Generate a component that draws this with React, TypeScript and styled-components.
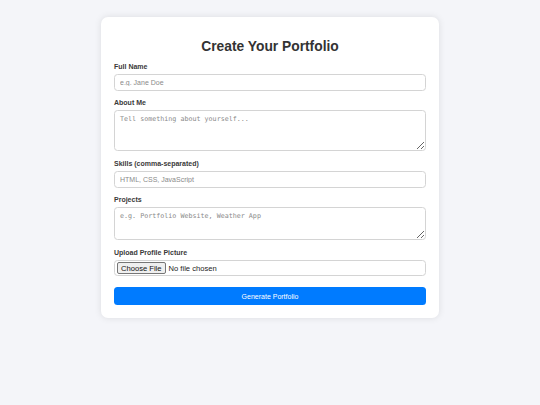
import React from "react";
import styled, { createGlobalStyle } from "styled-components";

const Global = createGlobalStyle`
  html, body { margin: 0; padding: 0; }
  body {
    background: #f4f5f9;
    font-family: "Liberation Sans", Arial, sans-serif;
    color: #333;
  }
`;

const Page = styled.div`
  display: flex;
  justify-content: center;
  align-items: flex-start;
  padding-top: 17px;
  min-height: 405px;
  box-sizing: border-box;
`;

const Card = styled.form`
  width: 338px;
  box-sizing: border-box;
  background: #fff;
  border-radius: 7px;
  box-shadow: 0 0 7px rgba(0, 0, 0, 0.1);
  padding: 13px 13px 13px;
  display: flex;
  flex-direction: column;
`;

const Title = styled.h2`
  margin: 8px 0 8px;
  text-align: center;
  font-size: 13.8px;
  font-weight: bold;
  line-height: 17px;
  color: #333;
`;

const Label = styled.label`
  display: block;
  font-size: 7px;
  font-weight: bold;
  line-height: 8px;
  color: #3a3a3a;
  margin-bottom: 3px;
`;

const fieldBase = `
  display: block;
  width: 100%;
  box-sizing: border-box;
  border: 1px solid #d4d4d4;
  border-radius: 3.5px;
  padding: 4px 5px;
  font-size: 7px;
  color: #333;
  background: #fff;
  margin: 0 0 8px;
  outline: none;
`;

const TextInput = styled.input`
  ${fieldBase}
  height: 17px;
  font-family: "Liberation Sans", Arial, sans-serif;
  &::placeholder { color: #8a8a8a; }
`;

const TextArea = styled.textarea<{ $h: number }>`
  ${fieldBase}
  height: ${(p) => p.$h}px;
  font-family: "DejaVu Sans Mono", "Liberation Mono", monospace;
  font-size: 6.7px;
  resize: vertical;
  margin-bottom: 9px;
  &::placeholder { color: #8a8a8a; }
`;

const FileInput = styled.input`
  ${fieldBase}
  height: 16px;
  padding: 1px 2px;
  font-family: "Liberation Sans", Arial, sans-serif;
  font-size: 7.6px;
  color: #222;
  margin-bottom: 11px;
  &::file-selector-button {
    font-family: "Liberation Sans", Arial, sans-serif;
    font-size: 7.6px;
    height: 12px;
    padding: 0 3px;
    margin-right: 3px;
    border: 1px solid #767676;
    border-radius: 2px;
    background: #efefef;
    color: #111;
  }
`;

const Submit = styled.button`
  width: 100%;
  height: 18px;
  border: none;
  border-radius: 3.5px;
  background: #007bff;
  color: #fff;
  font-family: "Liberation Sans", Arial, sans-serif;
  font-size: 7px;
  cursor: pointer;
`;

export default function App() {
  return (
    <>
      <Global />
      <Page>
        <Card onSubmit={(e) => e.preventDefault()}>
          <Title>Create Your Portfolio</Title>
          <Label htmlFor="name">Full Name</Label>
          <TextInput id="name" type="text" placeholder="e.g. Jane Doe" />
          <Label htmlFor="about">About Me</Label>
          <TextArea id="about" $h={41} placeholder="Tell something about yourself..." />
          <Label htmlFor="skills">Skills (comma-separated)</Label>
          <TextInput id="skills" type="text" placeholder="HTML, CSS, JavaScript" />
          <Label htmlFor="projects">Projects</Label>
          <TextArea id="projects" $h={33} placeholder="e.g. Portfolio Website, Weather App" />
          <Label htmlFor="pic">Upload Profile Picture</Label>
          <FileInput id="pic" type="file" />
          <Submit type="submit">Generate Portfolio</Submit>
        </Card>
      </Page>
    </>
  );
}
